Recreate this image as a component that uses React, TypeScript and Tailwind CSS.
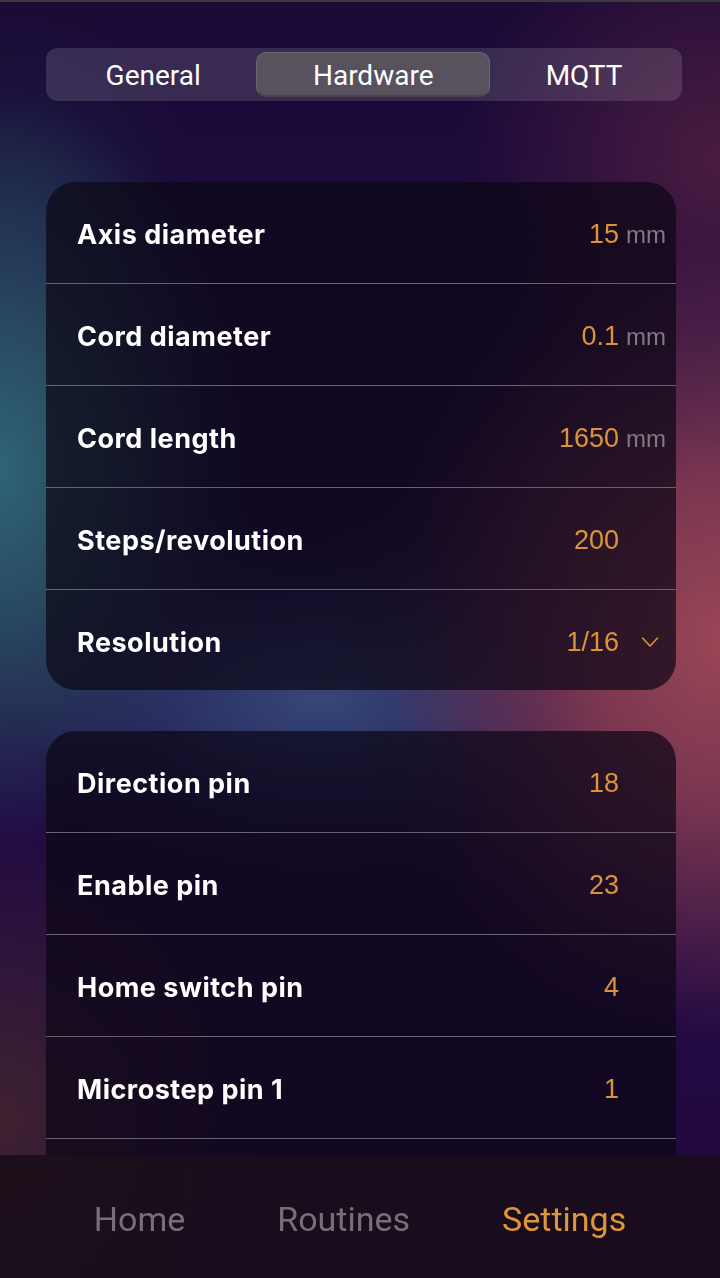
import React from 'react';

type Row = { label: string; value: string; unit?: string; select?: boolean };

const mechanics: Row[] = [
  { label: 'Axis diameter', value: '15', unit: 'mm' },
  { label: 'Cord diameter', value: '0.1', unit: 'mm' },
  { label: 'Cord length', value: '1650', unit: 'mm' },
  { label: 'Steps/revolution', value: '200' },
  { label: 'Resolution', value: '1/16', select: true },
];

const pins: Row[] = [
  { label: 'Direction pin', value: '18' },
  { label: 'Enable pin', value: '23' },
  { label: 'Home switch pin', value: '4' },
  { label: 'Microstep pin 1', value: '1' },
  { label: 'Microstep pin 2', value: '3' },
  { label: 'Microstep pin 3', value: '5' },
];

function SettingRow({ row, last }: { row: Row; last: boolean }) {
  return (
    <div
      className={`flex items-center pl-[31px] pr-[10px] pt-[4px] ${last ? 'h-[100px]' : 'h-[102px] border-b border-[#686170]'}`}
    >
      <span className="flex-1 text-white font-bold text-[27px] leading-none font-['Inter',sans-serif] tracking-[0.5px]">
        {row.label}
      </span>
      <span className="text-[#dc9437] text-[27px] leading-none font-['Liberation_Sans',Arial,sans-serif]">
        {row.value}
      </span>
      <span className="w-[47px] flex items-center justify-end">
        {row.unit && (
          <span className="text-[#7e7a80] text-[24px] leading-none font-['Liberation_Sans',Arial,sans-serif]">
            {row.unit}
          </span>
        )}
        {row.select && (
          <svg width="18" height="12" viewBox="0 0 18 12" className="mr-[7px]">
            <path
              d="M1.5 2 L9 10 L16.5 2"
              fill="none"
              stroke="#dc9437"
              strokeWidth="1.6"
              strokeLinecap="round"
              strokeLinejoin="round"
            />
          </svg>
        )}
      </span>
    </div>
  );
}

function Card({ rows }: { rows: Row[] }) {
  return (
    <div className="rounded-[30px] bg-[#0b0716]/70 backdrop-blur-2xl overflow-hidden">
      {rows.map((r, i) => (
        <SettingRow key={r.label} row={r} last={i === rows.length - 1} />
      ))}
    </div>
  );
}

export default function App() {
  const tabs = ['General', 'Hardware', 'MQTT'];
  const active = 'Hardware';

  return (
    <div className="h-screen w-full flex flex-col overflow-hidden bg-[#1c0a3c] bg-[radial-gradient(ellipse_240px_380px_at_0px_470px,#306474_0%,#28485f_40%,transparent_100%),radial-gradient(ellipse_340px_400px_at_720px_640px,#9a4656_0%,#7a3650_40%,transparent_100%),radial-gradient(ellipse_300px_150px_at_320px_700px,#374678_0%,#2c3266_45%,transparent_100%),radial-gradient(ellipse_260px_300px_at_0px_1120px,#3e2230_0%,transparent_100%),radial-gradient(ellipse_260px_260px_at_720px_160px,#4a1c40_0%,transparent_100%),radial-gradient(ellipse_200px_200px_at_0px_200px,#1a1a40_0%,transparent_100%),linear-gradient(180deg,#1a0a36_0%,#200a46_45%,#22093f_100%)]">
      <div className="h-[2px] bg-[#3a3a3a] shrink-0" />
      <div className="flex-1 overflow-hidden pl-[46px] pr-[38px] pt-[46px]">
        {/* Tabs */}
        <div className="flex p-[4px] h-[53px] rounded-[12px] bg-white/[0.13] font-['Roboto',sans-serif]">
          {tabs.map(t => (
            <button
              key={t}
              className={`flex-auto flex items-center justify-center pt-[3px] text-white text-[28px] rounded-[10px] ${
                t === active ? 'bg-[#58525f] border border-[#6c6870] border-b-[#48434f] border-b-2' : ''
              }`}
            >
              {t}
            </button>
          ))}
        </div>

        <div className="mt-[81px] mr-[6px] flex flex-col gap-[41px]">
          <Card rows={mechanics} />
          <Card rows={pins} />
        </div>
      </div>

      {/* Bottom nav */}
      <nav className="h-[123px] shrink-0 flex items-center justify-center gap-[92px] pt-[4px] bg-[#170d16]/85 backdrop-blur-xl font-['Roboto',sans-serif] text-[34px] leading-none">
        <span className="text-[#767076]">Home</span>
        <span className="text-[#767076]">Routines</span>
        <span className="text-[#df963a]">Settings</span>
      </nav>
    </div>
  );
}
